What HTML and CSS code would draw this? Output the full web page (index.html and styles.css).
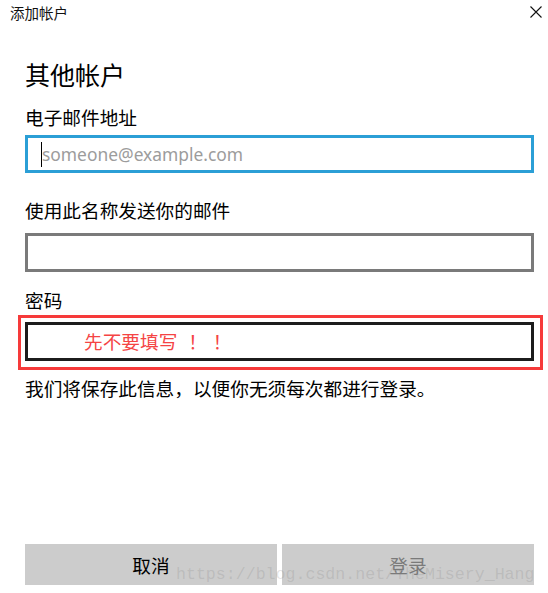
FILE: index.html
```html
<!DOCTYPE html>
<html lang="zh-CN">
<head>
  <meta charset="UTF-8" />
  <meta name="viewport" content="width=device-width, initial-scale=1.0"/>
  <title>添加帐户</title>
  <link rel="stylesheet" href="styles.css">
</head>
<body>
  <div class="titlebar">
    <span class="title">添加帐户</span>
    <svg class="close" width="12" height="12" viewBox="0 0 12 12">
      <path d="M0.5 0.5 L11.5 11.5 M11.5 0.5 L0.5 11.5" stroke="#111" stroke-width="1.1" fill="none"/>
    </svg>
  </div>

  <div class="content">
    <h1>其他帐户</h1>

    <div class="label first">电子邮件地址</div>
    <div class="field focused">
      <span class="caret"></span><span class="placeholder">someone@example.com</span>
    </div>

    <div class="label second">使用此名称发送你的邮件</div>
    <div class="field"></div>

    <div class="label third">密码</div>
    <div class="field dark marked">
      <span class="note">先不要填写 <span class="bang">！！</span></span>
    </div>

    <p class="info">我们将保存此信息，以便你无须每次都进行登录。</p>

    <div class="buttons">
      <button class="btn">取消</button>
      <button class="btn disabled">登录</button>
    </div>
  </div>

  <div class="watermark">https://blog.csdn.net/TheMisery_Hang</div>
</body>
</html>
```

FILE: styles.css
```css
html, body {
  margin: 0;
  height: 100%;
}

body {
  font-family: "Noto Sans", "Noto Sans CJK SC", sans-serif;
  background: #fff;
  color: #000;
  display: flex;
  flex-direction: column;
  position: relative;
}

.titlebar {
  height: 26px;
  display: flex;
  justify-content: space-between;
  align-items: flex-start;
  padding: 0 6px 0 10px;
}

.title {
  font-size: 14.5px;
  line-height: 26px;
  color: #111;
}

.close {
  margin-top: 6px;
}

.content {
  flex: 1;
  display: flex;
  flex-direction: column;
  padding: 0 14px 8px 25px;
}

h1 {
  margin: 32px 0 0;
  font-size: 25px;
  font-weight: normal;
  line-height: 34px;
}

.label {
  font-size: 18.67px;
  line-height: 24px;
}

.label.first { margin-top: 14px; }
.label.second { margin-top: 26px; }
.label.third { margin-top: 17px; }

.field {
  height: 39px;
  box-sizing: border-box;
  border: 3px solid #7a7a7a;
  margin-top: 10px;
  display: flex;
  align-items: center;
  position: relative;
}

.field.focused {
  border-color: #2b9fd6;
  margin-top: 5px;
  height: 38px;
  padding-left: 13px;
}

.field.dark {
  border-color: #1c1c1c;
  margin-top: 9px;
}

.field.marked::after {
  content: "";
  position: absolute;
  top: -10px;
  left: -10px;
  right: -12px;
  bottom: -12px;
  border: 3px solid #f63a3a;
}

.caret {
  width: 1px;
  height: 25px;
  background: #000;
}

.placeholder {
  font-size: 17.4px;
  color: #9c9c9c;
  line-height: 24px;
}

.note {
  margin-left: 56px;
  font-size: 18.67px;
  color: #f54444;
  line-height: 24px;
}

.bang {
  margin-left: 6px;
  letter-spacing: 6px;
}

.info {
  margin: 16px 0 0;
  font-size: 18.67px;
  line-height: 24px;
}

.buttons {
  margin-top: auto;
  display: flex;
  gap: 5px;
}

.btn {
  flex: 1;
  height: 41px;
  border: none;
  background: #cccccc;
  font-family: inherit;
  font-size: 18.67px;
  color: #000;
  padding: 0;
}

.btn.disabled {
  color: #7a7a7a;
}

.watermark {
  position: absolute;
  left: 176px;
  top: 564px;
  font-family: "Liberation Mono", monospace;
  font-size: 16.6px;
  line-height: 22px;
  color: rgba(120, 120, 120, 0.2);
  pointer-events: none;
}
```
